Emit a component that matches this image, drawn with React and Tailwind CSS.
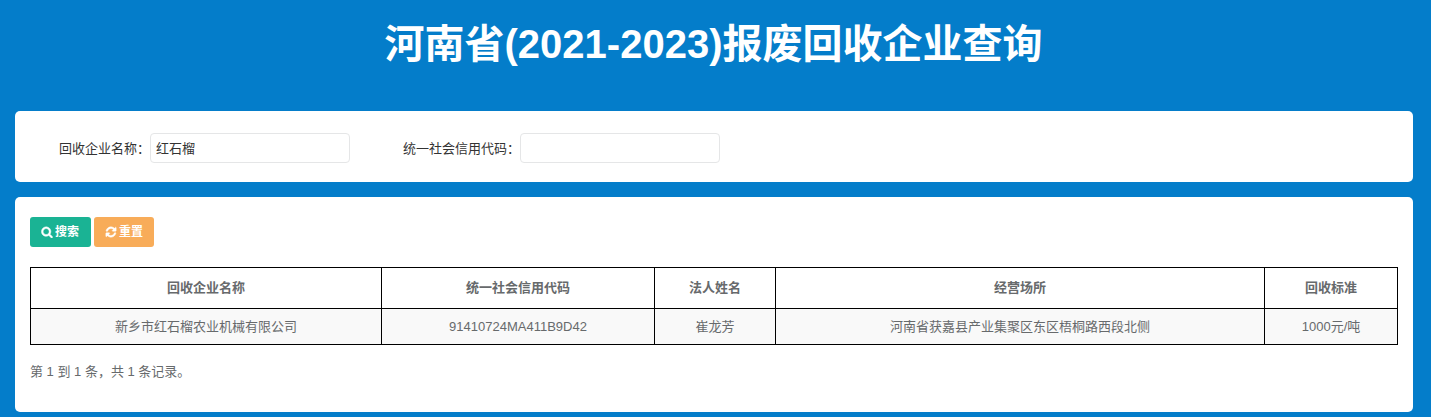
const columns = [
  { title: '回收企业名称', value: '新乡市红石榴农业机械有限公司', width: 'w-[351px]' },
  { title: '统一社会信用代码', value: '91410724MA411B9D42', width: 'w-[273px]' },
  { title: '法人姓名', value: '崔龙芳', width: 'w-[121px]' },
  { title: '经营场所', value: '河南省获嘉县产业集聚区东区梧桐路西段北侧', width: 'w-[489px]' },
  { title: '回收标准', value: '1000元/吨', width: 'w-[133px]' },
];

function SearchIcon() {
  return (
    <svg viewBox="0 0 1792 1792" className="h-[12px] w-[12px] fill-current stroke-current stroke-[70px]">
      <path d="M1216 832q0-185-131.5-316.5t-316.5-131.5-316.5 131.5-131.5 316.5 131.5 316.5 316.5 131.5 316.5-131.5 131.5-316.5zm512 832q0 52-38 90t-90 38q-54 0-90-38l-343-342q-179 124-399 124-143 0-273.5-55.5t-225-150-150-225-55.5-273.5 55.5-273.5 150-225 225-150 273.5-55.5 273.5 55.5 225 150 150 225 55.5 273.5q0 220-124 399l343 343q37 37 37 90z" />
    </svg>
  );
}

function RefreshIcon() {
  return (
    <svg viewBox="0 0 1792 1792" className="h-[12px] w-[12px] fill-current stroke-current stroke-[70px]">
      <path d="M1639 1056q0 5-1 7-64 268-268 434.5t-478 166.5q-146 0-282.5-55t-243.5-157l-129 129q-19 19-45 19t-45-19-19-45v-448q0-26 19-45t45-19h448q26 0 45 19t19 45-19 45l-137 137q71 66 161 102t187 36q134 0 250-65t186-179q11-17 53-117 8-23 30-23h192q13 0 22.5 9.5t9.5 22.5zm25-800v448q0 26-19 45t-45 19h-448q-26 0-45-19t-19-45 19-45l138-138q-148-137-349-137-134 0-250 65t-186 179q-11 17-53 117-8 23-30 23h-199q-13 0-22.5-9.5t-9.5-22.5v-7q65-268 270-434.5t480-166.5q146 0 284 55.5t245 156.5l130-129q19-19 45-19t45 19 19 45z" />
    </svg>
  );
}

function App() {
  return (
    <div className="h-[417px] overflow-hidden bg-[#047dca] font-['Liberation_Sans','Noto_Sans_CJK_SC',sans-serif] text-[13px] text-[#676a6c]">
      <h1 className="h-[111px] pt-[19px] pr-[4px] text-center text-[40px] leading-[50px] font-bold text-white">
        河南省(2021-2023)报废回收企业查询
      </h1>

      <div className="mx-[15px] w-[1398px]">
        <div className="flex h-[71px] items-center rounded-[5px] bg-white pt-[2px] pl-[44px]">
          <label className="pt-[2px] text-[#333]">回收企业名称：</label>
          <input
            readOnly
            value="红石榴"
            className="h-[30px] w-[200px] rounded-[4px] border border-[#e5e6e7] px-[5px] text-[13px] text-[#333] outline-none"
          />
          <label className="ml-[53px] pt-[2px] text-[#333]">统一社会信用代码：</label>
          <input
            readOnly
            className="h-[30px] w-[200px] rounded-[4px] border border-[#e5e6e7] px-[5px] outline-none"
          />
        </div>

        <div className="mt-[15px] h-[215px] rounded-[5px] bg-white px-[15px] pt-[20px]">
          <div className="flex gap-[3px]">
            <button className="flex h-[30px] w-[61px] items-center gap-[2px] rounded-[3px] bg-[#1ab394] pl-[11px] text-[12px] font-bold text-white">
              <SearchIcon />
              搜索
            </button>
            <button className="flex h-[30px] w-[60px] items-center gap-[2px] rounded-[3px] bg-[#f8ac59] pl-[11px] text-[12px] font-bold text-white">
              <RefreshIcon />
              重置
            </button>
          </div>

          <table className="mt-[20px] w-[1367px] table-fixed border-collapse text-center">
            <thead>
              <tr>
                {columns.map((col) => (
                  <th key={col.title} className={`h-[41px] border border-black font-bold ${col.width}`}>
                    {col.title}
                  </th>
                ))}
              </tr>
            </thead>
            <tbody>
              <tr className="bg-[#f9f9f9]">
                {columns.map((col) => (
                  <td key={col.title} className="h-[36px] border border-black">
                    {col.value}
                  </td>
                ))}
              </tr>
            </tbody>
          </table>

          <p className="mt-[17px] leading-[20px]">第 1 到 1 条，共 1 条记录。</p>
        </div>
      </div>
    </div>
  );
}

export default App;
